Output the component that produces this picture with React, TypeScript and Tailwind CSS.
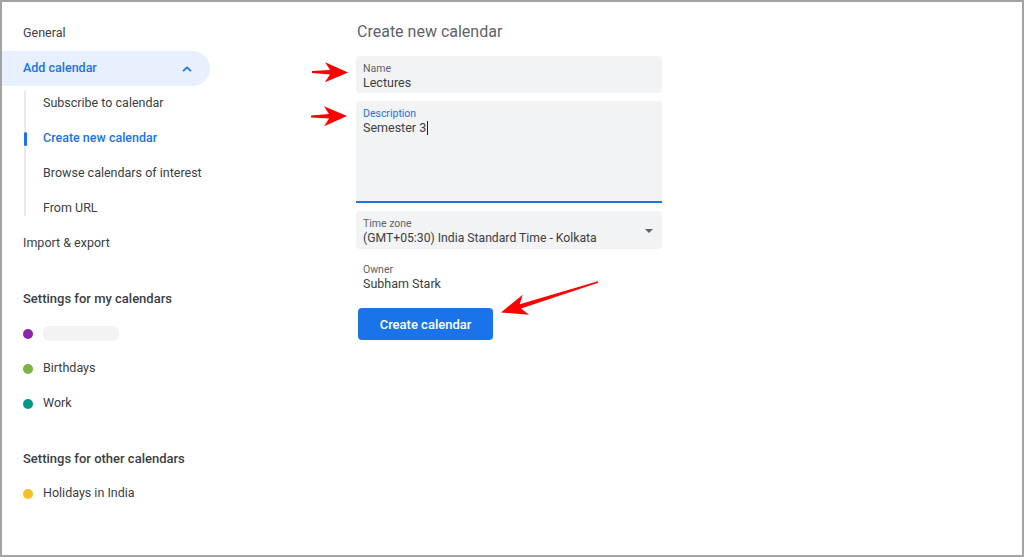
import React from "react";

type P = [number, number];

function arrowPoints(tail: P, tip: P, headLen: number, headW: number, shaftW: number, tailW: number): string {
  const dx = tip[0] - tail[0];
  const dy = tip[1] - tail[1];
  const len = Math.hypot(dx, dy);
  const ux = dx / len;
  const uy = dy / len;
  const nx = -uy;
  const ny = ux;
  const neck: P = [tip[0] - ux * headLen * 0.78, tip[1] - uy * headLen * 0.78];
  const back: P = [tip[0] - ux * headLen, tip[1] - uy * headLen];
  const pts: P[] = [
    [tail[0] + (nx * tailW) / 2, tail[1] + (ny * tailW) / 2],
    [neck[0] + (nx * shaftW) / 2, neck[1] + (ny * shaftW) / 2],
    [back[0] + (nx * headW) / 2, back[1] + (ny * headW) / 2],
    tip,
    [back[0] - (nx * headW) / 2, back[1] - (ny * headW) / 2],
    [neck[0] - (nx * shaftW) / 2, neck[1] - (ny * shaftW) / 2],
    [tail[0] - (nx * tailW) / 2, tail[1] - (ny * tailW) / 2],
  ];
  return pts.map((p) => `${p[0].toFixed(1)},${p[1].toFixed(1)}`).join(" ");
}

const font = { fontFamily: "Roboto, 'Liberation Sans', Arial, sans-serif" };

function Row({ children, className = "" }: { children: React.ReactNode; className?: string }) {
  return <div className={`h-[35px] flex items-center ${className}`}>{children}</div>;
}

export default function App() {
  return (
    <div
      className="relative w-[1024px] h-[557px] border-2 border-[#a3a3a3] bg-white flex text-[12.5px] text-[#3c4043] overflow-hidden"
      style={font}
    >
      {/* Sidebar */}
      <div className="w-[208px] shrink-0 pt-[14px]">
        <Row className="pl-[21px]">General</Row>
        <Row className="pl-[21px] pr-[16px] bg-[#e8f0fe] rounded-r-full justify-between text-[#1a73e8] font-medium">
          <span>Add calendar</span>
          <svg width="10" height="6" viewBox="0 0 10 6" className="mr-[2px]">
            <polyline points="1,5.2 5,1.4 9,5.2" fill="none" stroke="#1a73e8" strokeWidth="1.8" />
          </svg>
        </Row>
        <div className="relative ml-[22px]">
          <div className="absolute left-0 top-[5px] bottom-[10px] w-[2px] bg-[#e8eaed]" />
          <Row className="pl-[19px]">Subscribe to calendar</Row>
          <Row className="pl-[19px] relative text-[#1a73e8] font-medium">
            <div className="absolute left-0 top-[11px] w-[3px] h-[14px] bg-[#1a73e8] rounded-sm" />
            Create new calendar
          </Row>
          <Row className="pl-[19px]">Browse calendars of interest</Row>
          <Row className="pl-[19px]">From URL</Row>
        </div>
        <Row className="pl-[21px]">Import &amp; export</Row>

        <Row className="pl-[21px] mt-[20px] font-medium text-[13px]">Settings for my calendars</Row>
        <Row className="pl-[21px] gap-[10px]">
          <span className="w-[10px] h-[10px] rounded-full bg-[#8e24aa]" />
          <span className="w-[76px] h-[15px] rounded-md bg-[#f3f3f3]" />
        </Row>
        <Row className="pl-[21px] gap-[10px]">
          <span className="w-[10px] h-[10px] rounded-full bg-[#7cb342]" />
          <span>Birthdays</span>
        </Row>
        <Row className="pl-[21px] gap-[10px]">
          <span className="w-[10px] h-[10px] rounded-full bg-[#009688]" />
          <span>Work</span>
        </Row>

        <Row className="pl-[21px] mt-[20px] font-medium text-[13px]">Settings for other calendars</Row>
        <Row className="pl-[21px] gap-[10px]">
          <span className="w-[10px] h-[10px] rounded-full bg-[#f6bf26]" />
          <span>Holidays in India</span>
        </Row>
      </div>

      {/* Main */}
      <div className="ml-[146px] w-[306px] pt-[20px] flex flex-col">
        <div className="text-[16px] text-[#5f6368] leading-[20px] pl-[1px]">Create new calendar</div>

        <div className="mt-[14px] h-[37px] bg-[#f1f3f4] rounded-[4px] px-[7px] pt-[6px] flex flex-col">
          <span className="text-[10.5px] leading-[13px] text-[#5f6368]">Name</span>
          <span className="leading-[16px]">Lectures</span>
        </div>

        <div className="mt-[8px] h-[102px] bg-[#f1f3f4] rounded-t-[4px] border-b-2 border-[#1a73e8] px-[7px] pt-[6px] flex flex-col">
          <span className="text-[10.5px] leading-[13px] text-[#1a73e8]">Description</span>
          <span className="leading-[16px] flex items-center">
            Semester 3<span className="inline-block w-[1px] h-[14px] bg-[#202124] ml-[1px]" />
          </span>
        </div>

        <div className="mt-[8px] h-[38px] bg-[#f1f3f4] rounded-[4px] pl-[7px] pr-[7px] pt-[6px] flex items-start justify-between">
          <div className="flex flex-col">
            <span className="text-[10.5px] leading-[13px] text-[#5f6368]">Time zone</span>
            <span className="leading-[16px] text-[12.2px]">(GMT+05:30) India Standard Time - Kolkata</span>
          </div>
          <svg width="8" height="4" viewBox="0 0 8 4" className="mt-[12px] mr-[2px]">
            <polygon points="0,0 8,0 4,4" fill="#5f6368" />
          </svg>
        </div>

        <div className="mt-[14px] px-[7px] flex flex-col">
          <span className="text-[10.5px] leading-[13px] text-[#5f6368]">Owner</span>
          <span className="leading-[16px]">Subham Stark</span>
        </div>

        <button className="mt-[16px] ml-[2px] w-[135px] h-[32px] rounded-[4px] bg-[#1a73e8] text-white font-medium text-[13px] flex items-center justify-center pt-[1px]">
          Create calendar
        </button>
      </div>

      {/* Annotation arrows */}
      <svg className="absolute left-[-2px] top-[-2px] pointer-events-none" width="1024" height="557">
        <polygon fill="#ff0000" points={arrowPoints([312, 72], [348, 72.5], 23, 20, 4.5, 2)} />
        <polygon fill="#ff0000" points={arrowPoints([311, 116.5], [347, 116], 23, 20, 4.5, 2)} />
        <polygon fill="#ff0000" points={arrowPoints([598, 282], [501, 312.5], 26, 21, 4.5, 1.5)} />
      </svg>
    </div>
  );
}
